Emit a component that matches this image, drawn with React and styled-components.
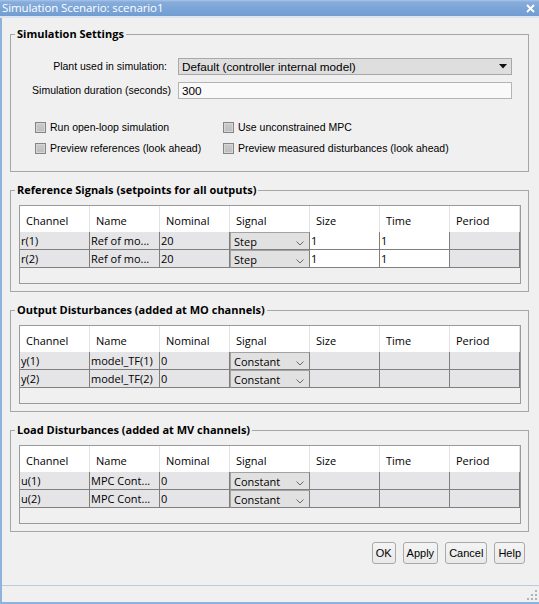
import React from 'react';
import styled, { createGlobalStyle } from 'styled-components';

const Global = createGlobalStyle`
  html, body { margin: 0; padding: 0; background: #f0f0f0; }
  body { font-family: "Liberation Sans", Arial, sans-serif; }
  * { box-sizing: border-box; }
`;

const UI = '"Open Sans", "Noto Sans", sans-serif';
const SYS = '"Liberation Sans", Arial, sans-serif';

const Window = styled.div`
  width: 539px;
  height: 604px;
  display: flex;
  flex-direction: column;
  background: #f0f0f0;
  overflow: hidden;
`;

const TitleBar = styled.div`
  height: 16px;
  flex: none;
  display: flex;
  align-items: center;
  justify-content: space-between;
  padding: 0 4px 0 2px;
  background: linear-gradient(#a9c5e6 0, #86acdb 2px, #7aa4d6 60%, #709dd2 100%);
`;

const TitleText = styled.span`
  font: 400 11.5px/16px ${UI};
  color: #ffffff;
  letter-spacing: -0.1px;
`;

const TitleSep = styled.div`
  height: 2px;
  flex: none;
  background: #dbe5f0;
`;

const Frame = styled.div`
  flex: 1;
  display: flex;
  flex-direction: column;
  border-left: 2px solid #8db3dc;
  border-bottom: 2px solid #8db3dc;
  min-height: 0;
`;

const Body = styled.div`
  flex: 1;
  display: flex;
  flex-direction: column;
  gap: 11px;
  padding: 9px 10px 0 8px;
`;

const GroupBox = styled.fieldset`
  margin: 0;
  padding: 0 7px ${p => p.$pb}px 8px;
  border: 1px solid #a6a6a6;
  min-width: 0;
`;

const Legend = styled.legend`
  margin-left: -4px;
  padding: 0 2px;
  font: 700 11px/14px ${UI};
  color: #000;
`;

const FieldGrid = styled.div`
  display: grid;
  grid-template-columns: 1fr 334px;
  column-gap: 7px;
  row-gap: 7px;
  margin: 17px 9px 0 0;
`;

const FieldLabel = styled.label`
  justify-self: end;
  align-self: center;
  padding-right: ${p => p.$inset || 0}px;
  font: 400 10.5px/13px ${SYS};
  color: #000;
`;

const SelectBox = styled.div`
  height: 17px;
  display: flex;
  align-items: center;
  justify-content: space-between;
  padding: 0 4px 0 3px;
  border: 1px solid #a8a8a8;
  background: #dedede;
  font: 400 11.75px/15px ${SYS};
  color: #000;
`;

const TextBox = styled.div`
  height: 17px;
  display: flex;
  align-items: center;
  padding: 0 3px;
  border: 1px solid #b4b4b4;
  background: #f9f9f9;
  font: 400 11.75px/15px ${SYS};
  color: #000;
`;

const CheckGrid = styled.div`
  display: grid;
  grid-template-columns: 188px auto;
  grid-auto-rows: 21px;
  margin-top: 18px;
  padding-left: 16px;
`;

const CheckItem = styled.label`
  display: flex;
  align-items: center;
  gap: 4px;
  font: 400 10.5px/13px ${SYS};
  color: #000;
`;

const CheckBoxSq = styled.span`
  width: 11px;
  height: 11px;
  flex: none;
  border: 1px solid #858585;
  background: linear-gradient(#cbcbcb, #bdbdbd);
  box-shadow: inset 0 0 0 1px #d6d6d6;
`;

const Table = styled.div`
  margin-top: 8px;
  width: 502px;
  height: 79px;
  border: 1px solid #9a9a9a;
  background: #f0f0f0;
  font: 400 11px/15px ${UI};
  color: #000;
`;

const COLS = '70px 70px 70px 80px 70px 70px 70px';

const HeaderRow = styled.div`
  display: grid;
  grid-template-columns: ${COLS};
  height: 26px;
  background: #fff;
`;

const HeaderCell = styled.div`
  display: flex;
  align-items: flex-end;
  padding: 0 0 4px 6px;
  border-right: 1px solid #e3e3e3;
`;

const Row = styled.div`
  display: grid;
  grid-template-columns: ${COLS};
  height: 18px;
`;

const Cell = styled.div`
  display: flex;
  align-items: center;
  padding-left: 1px;
  border-right: 1px solid #7f7f7f;
  border-bottom: 1px solid #7f7f7f;
  background: ${p => (p.$white ? '#ffffff' : '#e5e5e7')};
  white-space: nowrap;
  overflow: hidden;
`;

const ComboCell = styled.div`
  display: flex;
  align-items: center;
  justify-content: space-between;
  padding: 0 5px 0 3px;
  border: 1px solid #a3a3a3;
  border-right-color: #7f7f7f;
  border-bottom-color: #7f7f7f;
  background: #e1e1e1;
  white-space: nowrap;
  overflow: hidden;
`;

const Chevron = styled.svg`
  flex: none;
  margin-top: 5px;
`;

const ButtonRow = styled.div`
  display: flex;
  justify-content: flex-end;
  gap: 7px;
  padding-right: 4px;
  margin-top: -1px;
`;

const Button = styled.button`
  height: 22px;
  padding: 0 3px;
  border: 1px solid #a9a9a9;
  border-radius: 3px;
  background: linear-gradient(#f4f4f4, #e9e9e9);
  font: 400 11px/13px ${SYS};
  color: #000;
`;

const StatusBar = styled.div`
  height: 17px;
  flex: none;
  display: flex;
  justify-content: flex-end;
  align-items: flex-end;
  border-top: 1px solid #bdcadb;
  padding: 0 1px 1px 0;
`;

const headers = ['Channel', 'Name', 'Nominal', 'Signal', 'Size', 'Time', 'Period'];

const ChevronIcon = () => (
  <Chevron width="8" height="5" viewBox="0 0 8 5">
    <polyline points="0.5,0.5 4,4 7.5,0.5" fill="none" stroke="#6a6a6a" strokeWidth="1" />
  </Chevron>
);

const SignalTable = ({ rows, whiteInputs }) => (
  <Table>
    <HeaderRow>
      {headers.map(h => (
        <HeaderCell key={h}>{h}</HeaderCell>
      ))}
    </HeaderRow>
    {rows.map(r => (
      <Row key={r[0]}>
        <Cell>{r[0]}</Cell>
        <Cell>{r[1]}</Cell>
        <Cell>{r[2]}</Cell>
        <ComboCell>
          <span>{r[3]}</span>
          <ChevronIcon />
        </ComboCell>
        <Cell $white={whiteInputs}>{r[4]}</Cell>
        <Cell $white={whiteInputs}>{r[5]}</Cell>
        <Cell>{r[6]}</Cell>
      </Row>
    ))}
  </Table>
);

const refRows = [
  ['r(1)', 'Ref of mo...', '20', 'Step', '1', '1', ''],
  ['r(2)', 'Ref of mo...', '20', 'Step', '1', '1', ''],
];
const outRows = [
  ['y(1)', 'model_TF(1)', '0', 'Constant', '', '', ''],
  ['y(2)', 'model_TF(2)', '0', 'Constant', '', '', ''],
];
const loadRows = [
  ['u(1)', 'MPC Cont...', '0', 'Constant', '', '', ''],
  ['u(2)', 'MPC Cont...', '0', 'Constant', '', '', ''],
];

export default function App() {
  return (
    <>
      <Global />
      <Window>
        <TitleBar>
          <TitleText>Simulation Scenario: scenario1</TitleText>
          <svg width="9" height="9" viewBox="0 0 9 9">
            <path d="M1 1 L8 8 M8 1 L1 8" stroke="#ffffff" strokeWidth="1.8" />
          </svg>
        </TitleBar>
        <TitleSep />
        <Frame>
          <Body>
            <GroupBox $pb={12}>
              <Legend>Simulation Settings</Legend>
              <FieldGrid>
                <FieldLabel $inset={4}>Plant used in simulation:</FieldLabel>
                <SelectBox>
                  <span>Default (controller internal model)</span>
                  <svg width="8" height="5" viewBox="0 0 8 5">
                    <path d="M0 0 H8 L4 4.5 Z" fill="#111" />
                  </svg>
                </SelectBox>
                <FieldLabel>Simulation duration (seconds)</FieldLabel>
                <TextBox>300</TextBox>
              </FieldGrid>
              <CheckGrid>
                <CheckItem><CheckBoxSq />Run open-loop simulation</CheckItem>
                <CheckItem><CheckBoxSq />Use unconstrained MPC</CheckItem>
                <CheckItem><CheckBoxSq />Preview references (look ahead)</CheckItem>
                <CheckItem><CheckBoxSq />Preview measured disturbances (look ahead)</CheckItem>
              </CheckGrid>
            </GroupBox>

            <GroupBox $pb={7}>
              <Legend>Reference Signals (setpoints for all outputs)</Legend>
              <SignalTable rows={refRows} whiteInputs />
            </GroupBox>

            <GroupBox $pb={7}>
              <Legend>Output Disturbances (added at MO channels)</Legend>
              <SignalTable rows={outRows} />
            </GroupBox>

            <GroupBox $pb={7}>
              <Legend>Load Disturbances (added at MV channels)</Legend>
              <SignalTable rows={loadRows} />
            </GroupBox>

            <ButtonRow>
              <Button>OK</Button>
              <Button>Apply</Button>
              <Button>Cancel</Button>
              <Button>Help</Button>
            </ButtonRow>
          </Body>
          <StatusBar>
            <svg width="12" height="12" viewBox="0 0 12 12">
              {[[9, 1], [9, 5], [5, 5], [9, 9], [5, 9], [1, 9]].map(([x, y]) => (
                <rect key={`${x}-${y}`} x={x} y={y} width="2" height="2" fill="#a9b4c0" />
              ))}
            </svg>
          </StatusBar>
        </Frame>
      </Window>
    </>
  );
}
